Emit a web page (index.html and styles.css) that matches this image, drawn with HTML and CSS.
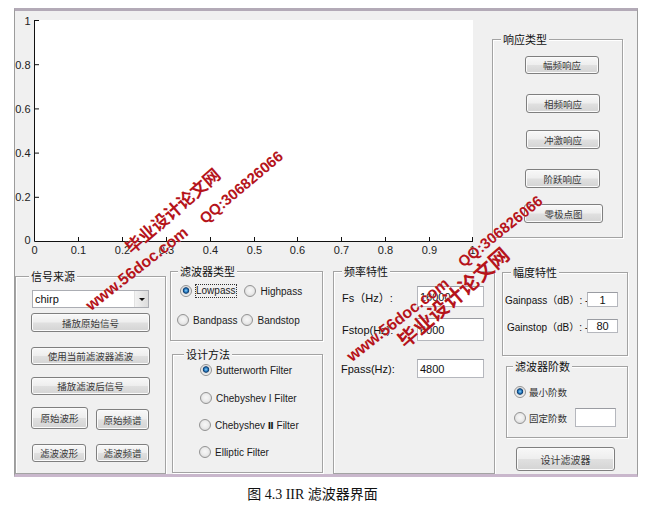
FILE: index.html
```html
<!DOCTYPE html>
<html lang="zh">
<head>
<meta charset="utf-8">
<title>IIR 滤波器界面</title>
<link rel="stylesheet" href="styles.css">
</head>
<body>
<div class="page">
  <div class="window">
    <div class="row-top">
      <svg class="axes" width="470" height="258" viewBox="0 0 470 258">
        <rect x="20" y="9" width="438" height="221" fill="#ffffff"/>
        <path d="M19.5 9V230.5H458" stroke="#111" stroke-width="1" fill="none"/>
        <path d="M20 9.5h4M20 53.7h4M20 97.9h4M20 142.1h4M20 186.3h4M63.5 230v-4M107.5 230v-4M151.5 230v-4M195.5 230v-4M239.5 230v-4M282.5 230v-4M326.5 230v-4M370.5 230v-4M414.5 230v-4M457.5 230v-4" stroke="#111" stroke-width="1"/>
        <g class="ylab" text-anchor="end">
          <text x="15.5" y="14">1</text>
          <text x="15.5" y="58">0.8</text>
          <text x="15.5" y="102">0.6</text>
          <text x="15.5" y="146">0.4</text>
          <text x="15.5" y="190">0.2</text>
          <text x="15.5" y="233">0</text>
        </g>
        <g class="xlab" text-anchor="middle">
          <text x="19.5" y="243">0</text>
          <text x="63.5" y="243">0.1</text>
          <text x="107.5" y="243">0.2</text>
          <text x="151.5" y="243">0.3</text>
          <text x="195.5" y="243">0.4</text>
          <text x="239.5" y="243">0.5</text>
          <text x="282.5" y="243">0.6</text>
          <text x="326.5" y="243">0.7</text>
          <text x="370.5" y="243">0.8</text>
          <text x="414.5" y="243">0.9</text>
          <text x="457.5" y="243">1</text>
        </g>
      </svg>
      <div class="panel resp">
        <div class="ptitle">响应类型</div>
        <div class="btn r1">幅频响应</div>
        <div class="btn r2">相频响应</div>
        <div class="btn r3">冲激响应</div>
        <div class="btn r4">阶跃响应</div>
        <div class="btn r5">零极点图</div>
      </div>
    </div>

    <div class="row-bottom">
      <div class="panel src">
        <div class="ptitle t-src">信号来源</div>
        <div class="combo"><span class="combo-text">chirp</span><span class="combo-arrow"></span></div>
        <div class="btn s1">播放原始信号</div>
        <div class="btn s2">使用当前滤波器滤波</div>
        <div class="btn s3">播放滤波后信号</div>
        <div class="btnrow br1">
          <div class="btn s4">原始波形</div>
          <div class="btn s5">原始频谱</div>
        </div>
        <div class="btnrow br2">
          <div class="btn s6">滤波波形</div>
          <div class="btn s7">滤波频谱</div>
        </div>
      </div>

      <div class="col col2">
        <div class="panel ftype">
          <div class="ptitle t-ftype">滤波器类型</div>
          <div class="rrow rr1">
            <div class="radio on"><span class="focus">Lowpass</span></div>
            <div class="radio hp">Highpass</div>
          </div>
          <div class="rrow rr2">
            <div class="radio">Bandpass</div>
            <div class="radio bs">Bandstop</div>
          </div>
        </div>
        <div class="panel method">
          <div class="ptitle t-method">设计方法</div>
          <div class="radio on m1">Butterworth Filter</div>
          <div class="radio m2">Chebyshev I Filter</div>
          <div class="radio m3"><span>Chebyshev <span class="roman">Ⅱ</span> Filter</span></div>
          <div class="radio m4">Elliptic Filter</div>
        </div>
      </div>

      <div class="panel freq">
        <div class="ptitle t-freq">频率特性</div>
        <div class="frow f1"><span class="flabel">Fs（Hz）:</span><div class="field fin">16000</div></div>
        <div class="frow f2"><span class="flabel">Fstop(Hz):</span><div class="field fin">6000</div></div>
        <div class="frow f3"><span class="flabel">Fpass(Hz):</span><div class="field fin">4800</div></div>
      </div>

      <div class="col col4">
        <div class="panel gain">
          <div class="ptitle t-gain">幅度特性</div>
          <div class="grow g1"><span class="glabel">Gainpass（dB）: -</span><div class="field gin">1</div></div>
          <div class="grow g2"><span class="glabel">Gainstop（dB）: -</span><div class="field gin">80</div></div>
        </div>
        <div class="panel order">
          <div class="ptitle t-order">滤波器阶数</div>
          <div class="radio cn on o1">最小阶数</div>
          <div class="orow">
            <div class="radio cn">固定阶数</div>
            <div class="field oin"></div>
          </div>
        </div>
        <div class="btn design">设计滤波器</div>
      </div>
    </div>
  </div>

  <div class="caption">图 4.3 IIR 滤波器界面</div>

  <div class="wm wm-www1">www.56doc.com</div>
  <div class="wm wm-cn1">毕业设计论文网</div>
  <div class="wm wm-qq1">QQ:306826066</div>
  <div class="wm wm-www2">www.56doc.com</div>
  <div class="wm wm-cn2">毕业设计论文网</div>
  <div class="wm wm-qq2">QQ:306826066</div>
</div>
</body>
</html>
```
FILE: styles.css
```css
html, body {
  margin: 0;
  padding: 0;
  background: #ffffff;
}
body {
  font-family: "Liberation Sans", "Noto Sans CJK SC", sans-serif;
  color: #111;
}
.page {
  position: relative;
  width: 647px;
  height: 526px;
  padding: 8px 0 0 14px;
  box-sizing: border-box;
  overflow: hidden;
}
.window {
  width: 622px;
  height: 463px;
  background: #f0f0f0;
  border-left: 1px solid #9c9c9c;
  border-right: 1px solid #9c9c9c;
  border-top: 3px solid #b3aab7;
  border-bottom: 3px solid #c9b7cc;
  overflow: hidden;
}
.row-top {
  display: flex;
  align-items: flex-start;
  height: 258px;
}
.axes {
  display: block;
  flex: none;
}
.axes text {
  font-family: "Liberation Sans", sans-serif;
  font-size: 11px;
  fill: #222;
}

/* panels */
.panel {
  box-sizing: border-box;
  border: 1px solid #a3a3a3;
  box-shadow: inset 1px 1px 0 #ffffff, 1px 1px 0 #ffffff;
  display: flex;
  flex-direction: column;
  align-items: flex-start;
  flex: none;
}
.ptitle {
  height: 14px;
  line-height: 14px;
  margin: -8px 0 -6px 8px;
  padding: 0 2px;
  background: #f0f0f0;
  font-family: "Noto Sans CJK SC", sans-serif;
  font-size: 11px;
  color: #111;
  white-space: nowrap;
}

/* buttons */
.btn {
  box-sizing: border-box;
  display: flex;
  align-items: center;
  justify-content: center;
  flex: none;
  border: 1px solid #7f7f7f;
  border-radius: 3px;
  background: linear-gradient(#f8f8f8 0%, #eeeeee 48%, #e0e0e0 52%, #d4d4d4 100%);
  box-shadow: inset 0 0 0 1px #fbfbfb;
  font-family: "Noto Sans CJK SC", sans-serif;
  font-size: 9.5px;
  color: #3a3a3a;
  white-space: nowrap;
}

/* response panel */
.resp { width: 131px; height: 199px; margin: 28px 0 0 7px; }
.r1 { width: 74px; height: 18px; margin: 16px 0 0 32px; }
.r2 { width: 74px; height: 19px; margin: 20px 0 0 33px; }
.r3 { width: 74px; height: 19px; margin: 17px 0 0 33px; }
.r4 { width: 75px; height: 19px; margin: 20px 0 0 32px; }
.r5 { width: 79px; height: 19px; margin: 16px 0 0 31px; }

/* bottom row */
.row-bottom {
  display: flex;
  align-items: flex-start;
}
.col {
  display: flex;
  flex-direction: column;
  align-items: flex-start;
  flex: none;
}

/* signal source */
.src { width: 151px; height: 198px; margin-top: 7px; }
.t-src { margin-left: 13px; }
.combo {
  box-sizing: border-box;
  width: 117px;
  height: 18px;
  margin: 13px 0 0 16px;
  background: #ffffff;
  border: 1px solid #abadb3;
  display: flex;
  align-items: stretch;
}
.combo-text {
  flex: 1;
  font-size: 11px;
  line-height: 16px;
  padding-left: 2px;
  color: #111;
}
.combo-arrow {
  width: 13px;
  background: linear-gradient(to right, #f2f2f2, #dcdcdc);
  border-left: 1px solid #e2e2e2;
  display: flex;
  align-items: center;
  justify-content: center;
}
.combo-arrow::after {
  content: "";
  border-left: 3px solid transparent;
  border-right: 3px solid transparent;
  border-top: 3px solid #111;
}
.s1 { width: 119px; height: 19px; margin: 5px 0 0 15px; }
.s2 { width: 119px; height: 18px; margin: 15px 0 0 15px; }
.s3 { width: 119px; height: 18px; margin: 12px 0 0 15px; }
.btnrow { display: flex; align-items: flex-start; }
.br1 { margin-top: 12px; }
.br2 { margin-top: 14px; }
.s4 { width: 57px; height: 22px; margin-left: 15px; }
.s5 { width: 53px; height: 21px; margin: 2px 0 0 8px; }
.s6 { width: 54px; height: 18px; margin-left: 16px; }
.s7 { width: 53px; height: 18px; margin-left: 10px; }

/* radios */
.radio {
  display: flex;
  align-items: center;
  gap: 4px;
  height: 14px;
  font-family: "Liberation Sans", "Noto Sans CJK SC", sans-serif;
  font-size: 10px;
  color: #1a1a1a;
  white-space: nowrap;
  flex: none;
}
.radio::before {
  content: "";
  flex: none;
  box-sizing: border-box;
  width: 12px;
  height: 12px;
  border-radius: 50%;
  border: 1px solid #939393;
  background: radial-gradient(circle at 50% 45%, #f7f7f7 0%, #ececec 45%, #cfcfcf 100%);
}
.radio.on::before {
  background: radial-gradient(circle at 50% 45%, #8fd3fb 0%, #2b7fc4 22%, #0c3a6c 38%, #dcdcdc 48%, #f4f4f4 70%, #d6d6d6 100%);
}
.radio.cn {
  font-family: "Noto Sans CJK SC", sans-serif;
  font-size: 9.5px;
  gap: 3px;
  color: #333;
}
.roman {
  font-family: "DejaVu Sans", "Liberation Serif", serif;
  font-size: 9px;
  font-weight: bold;
}
.focus {
  outline: 1px dotted #333;
  outline-offset: 0px;
  line-height: 12px;
  padding: 0 1px 0 0;
}

.col2 { margin-left: 4px; width: 153px; }
.ftype { width: 153px; height: 70px; margin-top: 2px; }
.t-ftype { margin-left: 7px; }
.rrow { display: flex; align-items: center; height: 14px; }
.rr1 { margin-top: 12px; padding-left: 9px; }
.rr2 { margin-top: 15px; padding-left: 6px; }
.hp { margin-left: 8px; }
.bs { margin-left: 4px; }

.method { width: 151px; height: 119px; margin: 13px 0 0 2px; }
.t-method { margin-left: 11px; }
.m1 { margin: 8px 0 0 27px; }
.m2 { margin: 14px 0 0 27px; }
.m3 { margin: 13px 0 0 26px; }
.m4 { margin: 13px 0 0 26px; }

/* frequency panel */
.freq { width: 162px; height: 203px; margin: 2px 0 0 10px; }
.t-freq { margin-left: 8px; }
.frow { display: flex; align-items: center; }
.flabel {
  width: 75px;
  font-size: 11px;
  color: #111;
  white-space: nowrap;
}
.f1 { margin: 14px 0 0 8px; height: 21px; }
.f2 { margin: 11px 0 0 8px; height: 23px; }
.f3 { margin: 18px 0 0 7px; height: 19px; }
.f3 .flabel { width: 76px; }
.field {
  box-sizing: border-box;
  background: #ffffff;
  border: 1px solid #b5b7bd;
  border-top-color: #9a9ca2;
  display: flex;
  align-items: center;
  font-size: 11px;
  color: #111;
}
.fin { width: 67px; height: 100%; padding-left: 2px; }

/* gain panel */
.col4 { margin-left: 7px; width: 126px; }
.gain { width: 126px; height: 84px; margin-top: 3px; }
.t-gain { margin-left: 8px; }
.grow { display: flex; align-items: center; }
.glabel {
  font-size: 10px;
  white-space: nowrap;
  color: #111;
  overflow: hidden;
}
.g1 { margin: 19px 0 0 2px; height: 15px; }
.g1 .glabel { width: 82px; }
.g2 { margin: 12px 0 0 4px; height: 14px; }
.g2 .glabel { width: 80px; }
.gin { width: 31px; height: 100%; justify-content: center; font-size: 11px; }

/* order panel */
.order { width: 122px; height: 72px; margin: 10px 0 0 4px; }
.t-order { margin-left: 6px; }
.o1 { margin: 18px 0 0 7px; }
.orow {
  display: flex;
  align-items: center;
  height: 19px;
  margin: 9px 0 0 7px;
  width: 102px;
}
.oin { width: 41px; height: 19px; margin-left: auto; }

.design { width: 99px; height: 24px; margin: 9px 0 0 14px; font-size: 10px; }

/* caption */
.caption {
  margin-top: 9px;
  padding-right: 36px;
  text-align: center;
  font-family: "Liberation Serif", "Noto Sans CJK SC", serif;
  font-size: 14px;
  line-height: 18px;
  color: #111;
}

/* watermarks (overlay) */
.wm {
  position: absolute;
  white-space: nowrap;
  color: #b5141b;
  font-weight: bold;
  transform: translate(-50%, -50%) rotate(-40deg);
  text-shadow: 0 0 1px rgba(255,255,255,0.6);
  line-height: 1;
}
.wm-www1 { left: 137px; top: 269px; font-family: "Liberation Sans", sans-serif; font-size: 16px; transform: translate(-50%, -50%) rotate(-38deg); }
.wm-cn1 { left: 172px; top: 210px; font-family: "Noto Sans CJK SC", sans-serif; font-size: 17px; transform: translate(-50%, -50%) rotate(-41deg); }
.wm-qq1 { left: 241px; top: 187px; font-family: "Liberation Sans", sans-serif; font-size: 15px; font-weight: 600; transform: translate(-50%, -50%) rotate(-40deg); }
.wm-www2 { left: 398px; top: 320px; font-family: "Liberation Sans", sans-serif; font-size: 16px; transform: translate(-50%, -50%) rotate(-38deg); }
.wm-cn2 { left: 453px; top: 297px; font-family: "Noto Sans CJK SC", sans-serif; font-size: 20px; transform: translate(-50%, -50%) rotate(-41deg); }
.wm-qq2 { left: 500px; top: 231px; font-family: "Liberation Sans", sans-serif; font-size: 15px; font-weight: 600; transform: translate(-50%, -50%) rotate(-39deg); }
```
